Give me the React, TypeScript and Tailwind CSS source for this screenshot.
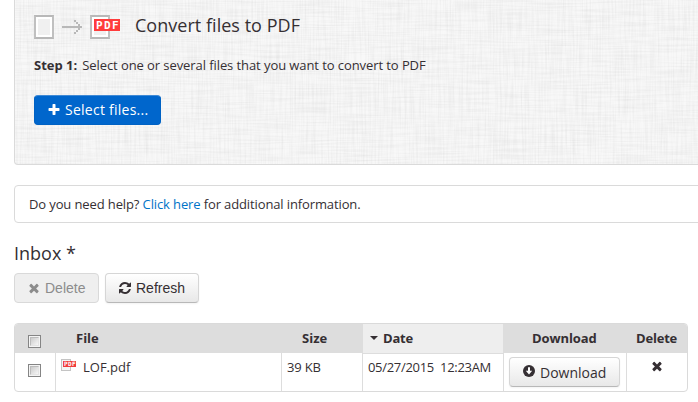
import React from 'react';

const icons = {
  plus: 'M1600 736v192q0 40-28 68t-68 28h-416v416q0 40-28 68t-68 28h-192q-40 0-68-28t-28-68v-416h-416q-40 0-68-28t-28-68v-192q0-40 28-68t68-28h416v-416q0-40 28-68t68-28h192q40 0 68 28t28 68v416h416q40 0 68 28t28 68z',
  times: 'M1490 1322q0 40-28 68l-136 136q-28 28-68 28t-68-28l-294-294-294 294q-28 28-68 28t-68-28l-136-136q-28-28-28-68t28-68l294-294-294-294q-28-28-28-68t28-68l136-136q28-28 68-28t68 28l294 294 294-294q28-28 68-28t68 28l136 136q28 28 28 68t-28 68l-294 294 294 294q28 28 28 68z',
  refresh: 'M1639 1056q0 5-1 7-64 268-268 434.5t-478 166.5q-146 0-282.5-55t-243.5-157l-129 129q-19 19-45 19t-45-19-19-45v-448q0-26 19-45t45-19h448q26 0 45 19t19 45-19 45l-137 137q71 66 161 102t187 36q134 0 250-65t186-179q11-17 53-117 8-23 30-23h192q13 0 22.5 9.5t9.5 22.5zm25-800v448q0 26-19 45t-45 19h-448q-26 0-45-19t-19-45 19-45l138-138q-148-137-349-137-134 0-250 65t-186 179q-11 17-53 117-8 23-30 23h-199q-13 0-22.5-9.5t-9.5-22.5v-7q65-268 270-434.5t480-166.5q146 0 284 55.5t245 156.5l130-129q19-19 45-19t45 19 19 45z',
};

const Icon: React.FC<{ name: keyof typeof icons; className?: string }> = ({ name, className }) => (
  <svg viewBox="0 0 1792 1792" fill="currentColor" className={className}>
    <path d={icons[name]} />
  </svg>
);

// faint woven texture behind the upload panel
const Linen: React.FC = () => (
  <svg className="absolute inset-0 w-full h-full" aria-hidden="true">
    <filter id="weft" x="0" y="0" width="100%" height="100%">
      <feTurbulence type="fractalNoise" baseFrequency="0.025 0.6" numOctaves="2" seed="4" />
      <feColorMatrix values="0 0 0 0 0  0 0 0 0 0  0 0 0 0 0  0 0 0 0.08 -0.03" />
    </filter>
    <filter id="warp" x="0" y="0" width="100%" height="100%">
      <feTurbulence type="fractalNoise" baseFrequency="0.6 0.025" numOctaves="2" seed="9" />
      <feColorMatrix values="0 0 0 0 0  0 0 0 0 0  0 0 0 0 0  0 0 0 0.08 -0.03" />
    </filter>
    <rect width="100%" height="100%" filter="url(#weft)" />
    <rect width="100%" height="100%" filter="url(#warp)" />
  </svg>
);

const Page: React.FC = () => (
  <div className="w-5 h-6 border-2 border-y-[#b8b8b8] border-x-[#c0c0c0] bg-white p-0.5">
    <div className="w-full h-full bg-[#f0f0f0]" />
  </div>
);

const Checkbox: React.FC = () => (
  <div className="w-[13px] h-[13px] border border-[#858585] bg-[#f4f4f4] p-px">
    <div className="w-full h-full border border-[#bcbcbc] border-r-[#e4e4e4] border-b-[#e4e4e4] bg-linear-to-br from-[#cbcbcb] to-[#f6f6f6]" />
  </div>
);

const App: React.FC = () => {
  return (
    <div className="w-[698px] h-[402px] overflow-hidden bg-white pl-3.5 font-['Open_Sans',sans-serif] text-[13px] leading-5 text-[#352f33]">
      <section className="relative w-[720px] h-[165px] border border-t-0 border-[#dadada] rounded-b bg-[#f8f8f8] overflow-hidden">
        <Linen />
        <div className="relative pl-[19px] pt-[14px]">
          <div className="flex items-center h-[26px]">
            <Page />
            <svg width="20" height="14" viewBox="0 0 20 14" className="ml-2" fill="#b8b8b8" shapeRendering="crispEdges">
              <path d="M0 6h20v2H0zM12 0h2v2h-2zM14 2h2v2h-2zM16 4h2v2h-2zM16 8h2v2h-2zM14 10h2v2h-2zM12 12h2v2h-2z" />
            </svg>
            <div className="relative ml-2">
              <Page />
              <span className="absolute left-1 top-1 w-[26px] h-3 bg-[#ff3c3c] text-white font-['DejaVu_Sans_Mono',monospace] font-bold text-[11px] leading-[14px] tracking-[1.4px] pl-[2px]">PDF</span>
            </div>
            <h1 className="ml-[25px] -mt-1 text-[18px] leading-[26px] tracking-[0.03px] whitespace-nowrap">Convert files to PDF</h1>
          </div>
          <p className="mt-[15px] flex gap-[5px] whitespace-nowrap">
            <b>Step 1:</b>
            <span className="tracking-[-0.08px]">Select one or several files that you want to convert to PDF</span>
          </p>
          <button className="mt-5 flex items-center w-[127px] h-[30px] rounded bg-[#0066cc] border border-[#0062c4] border-t-[#3f8ad6] pl-3 text-[14px] tracking-[0.25px] text-white whitespace-nowrap">
            <Icon name="plus" className="w-[14px] h-[14px] mr-1" />
            Select files...
          </button>
        </div>
      </section>

      <section className="mt-5 w-[720px] h-[38px] border border-[#dadada] rounded pl-3.5 leading-9 tracking-[-0.12px]">
        Do you need help? <a className="text-[#0074c8]">Click here</a> for additional information.
      </section>

      <h2 className="mt-[17px] text-[18px] leading-[26px]">Inbox *</h2>

      <div className="mt-[7px] flex gap-1.5 font-['Liberation_Sans',sans-serif] text-[14px]">
        <button className="flex items-center w-[85px] h-[30px] rounded border border-[#d9d9d9] bg-[#efefef] pl-3 text-[#8c8c8c]">
          <Icon name="times" className="w-[14px] h-[14px] mr-1" />
          Delete
        </button>
        <button className="flex items-center w-[94px] h-[30px] rounded border border-[#d6d6d6] border-b-[#b8b8b8] bg-linear-to-b from-white to-[#e8e8e8] pl-3 shadow-[0_1px_2px_rgba(0,0,0,0.05)]">
          <Icon name="refresh" className="w-[14px] h-[14px] mr-1" />
          Refresh
        </button>
      </div>

      <div className="mt-5 w-[674px] h-[69px] border border-[#dadada] rounded overflow-hidden">
        <div className="grid grid-cols-[40px_226px_81px_141px_123px_61px] h-[29px] bg-[#dddddd] font-bold leading-[29px]">
          <div className="pl-[13px] pt-[11px]"><Checkbox /></div>
          <div className="pl-[21px]">File</div>
          <div className="pl-[21px]">Size</div>
          <div className="flex items-center pl-[7px] bg-[#eeeeee] border-b border-[#dddddd] border-l border-l-[#dddddd] tracking-[-0.2px]">
            <svg width="8" height="4" viewBox="0 0 8 4" className="mr-[5px] -mt-0.5" fill="#352f33"><path d="M0 0h8L4 4z" /></svg>
            Date
          </div>
          <div className="pl-[29px] tracking-[-0.1px]">Download</div>
          <div className="pl-[10px] tracking-[-0.2px]">Delete</div>
        </div>
        <div className="grid grid-cols-[40px_226px_81px_141px_123px_61px] h-[38px] leading-[29px]">
          <div className="pl-[13px] pt-[11px]"><Checkbox /></div>
          <div className="flex border-l border-[#dddddd] pl-[5px]">
            <div className="relative mt-1.5 w-[10px] h-3 border border-[#c4c4c4] bg-[#f4f4f4]">
              <span className="absolute left-[1px] top-[1px] w-[13px] h-1.5 bg-[#f03c3c] text-white font-['DejaVu_Sans_Mono',monospace] font-bold text-[6px] leading-[6px] tracking-[0.4px] pl-[1px]">PDF</span>
            </div>
            <span className="ml-3">LOF.pdf</span>
          </div>
          <div className="border-l border-[#dddddd] pl-[5px] tracking-[-0.2px]">39 KB</div>
          <div className="border-l border-[#dddddd] pl-[5px] whitespace-pre tracking-[-0.31px]">05/27/2015  12:23AM</div>
          <div className="border-l border-[#dddddd] pl-[5px] pt-1">
            <button className="flex items-center w-[111px] h-[30px] rounded border border-[#d6d6d6] border-b-[#b8b8b8] bg-linear-to-b from-white to-[#e8e8e8] pl-3 text-[14px] shadow-[0_1px_2px_rgba(0,0,0,0.05)]">
              <svg width="14" height="14" viewBox="0 0 14 14" className="mr-1 -mt-0.5" fill="#352f33">
                <circle cx="7" cy="7" r="6" />
                <path d="M6 3.2h2v3.6h2.2L7 10.4 3.8 6.8H6z" fill="#fff" />
              </svg>
              Download
            </button>
          </div>
          <div className="border-l border-[#dddddd] pl-[23px] pt-[6px]">
            <Icon name="times" className="w-[14px] h-[14px]" />
          </div>
        </div>
      </div>
    </div>
  );
};

export default App;
